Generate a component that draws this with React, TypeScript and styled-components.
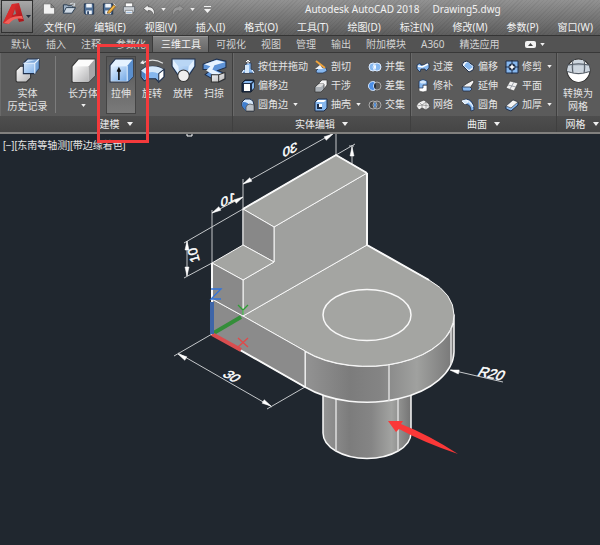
import React from "react";
import styled, { createGlobalStyle, css } from "styled-components";

const GlobalStyle = createGlobalStyle`
  * { box-sizing: border-box; }
  html, body { margin: 0; background: #20272f; }
  body, button {
    font-family: "Noto Sans", "Noto Sans CJK SC", sans-serif;
    font-size: 10px;
    line-height: 13px;
    color: #e4e4e4;
  }
  button { background: none; border: 0; margin: 0; padding: 0; cursor: pointer; white-space: nowrap; }
  svg { display: block; flex: none; }
`;

const Window = styled.div`
  position: relative;
  display: flex;
  flex-direction: column;
  min-height: 100vh;
  overflow: hidden;
`;

const Header = styled.header`
  display: flex;
  gap: 6px;
  height: 36px;
  padding-left: 1px;
  background:
    repeating-linear-gradient(135deg, rgba(0, 0, 0, 0.05) 0 1px, transparent 1px 3px),
    linear-gradient(#929292, #7a7a7a 45%, #5e5e5e);
  border-bottom: 1px solid #343434;
`;

const AppButton = styled.button`
  display: flex;
  align-items: center;
  width: 32px;
  height: 33px;
  border: 1px solid #303030;
  background: linear-gradient(#a9a9a9, #666);
`;

const HeaderRows = styled.div`
  flex: 1;
  min-width: 0;
`;

const QuickBar = styled.div`
  display: flex;
  align-items: center;
  height: 18px;
`;

const QuickButton = styled.button<{ $narrow?: boolean }>`
  display: flex;
  align-items: center;
  justify-content: center;
  width: ${(p) => (p.$narrow ? 9 : 20)}px;
  height: 17px;
`;

const Title = styled.div`
  display: flex;
  gap: 13px;
  margin-left: 88px;
  color: #f2f2f2;
  white-space: nowrap;
`;

const MenuBar = styled.nav`
  display: flex;
  gap: 19px;
  height: 18px;
  padding-left: 5px;
`;

const MenuButton = styled.button`
  height: 19px;
  color: #f2f2f2;
`;

const TabBar = styled.div`
  display: flex;
  height: 17px;
  padding-left: 3px;
  background: #535353;
  border-bottom: 1px solid #383838;
`;

const Tab = styled.button<{ $active?: boolean }>`
  padding: 0 7px 0 8px;
  color: #d2d2d2;
  ${(p) =>
    p.$active &&
    css`
      color: #f4f4f4;
      background: linear-gradient(#858585, #666);
      box-shadow: inset 0 1px #979797, -1px 0 #3b3b3b, 1px 0 #3b3b3b;
    `}
`;

const RibbonToggle = styled.button`
  display: flex;
  align-items: center;
  gap: 4px;
  margin-left: 18px;
`;

const Ribbon = styled.section`
  display: grid;
  grid-template-columns: 233fr 178fr 146fr 51fr;
  margin-right: -8px;
  background: #5b5b5b;
  border-bottom: 2px solid #81807e;
`;

const Panel = styled.section`
  display: flex;
  flex-direction: column;
  min-width: 0;
  border-right: 1px solid #3f3f3f;
  box-shadow: inset 1px 0 #696969;
`;

const PanelBody = styled.div`
  display: flex;
  height: 63px;
  padding-top: 3px;
`;

const PanelTitle = styled.button`
  display: flex;
  align-items: center;
  justify-content: center;
  gap: 7px;
  height: 16px;
  color: #ededed;
  background: linear-gradient(#4e4e4e, #454545);
`;

const LargeButton = styled.button<{ $selected?: boolean; $width: number }>`
  display: flex;
  flex-direction: column;
  align-items: center;
  width: ${(p) => p.$width}px;
  height: 58px;
  padding-top: 2px;
  ${(p) =>
    p.$selected &&
    css`
      background: linear-gradient(#565656, #7b7b7b);
      box-shadow: inset 0 0 0 1px #444;
    `}
`;

const LargeLabel = styled.span`
  margin-top: 4px;
`;

const DropMark = styled.span`
  padding-top: 4px;
`;

const Divider = styled.div`
  width: 1px;
  height: 57px;
  margin-right: 12px;
  background: #7c7c7c;
`;

const SolidTools = styled.div`
  display: flex;
  gap: 1px;
  margin-left: 8px;
`;

const ToolGrid = styled.div<{ $columns: string; $inset: number }>`
  display: grid;
  grid-template-columns: ${(p) => p.$columns};
  grid-template-rows: repeat(3, 19px);
  padding: 1px 0 0 ${(p) => p.$inset}px;
`;

const SmallButton = styled.button`
  display: flex;
  align-items: center;
  gap: 3px;
`;

const SmallMark = styled.span`
  padding-left: 2px;
`;

const Viewport = styled.main`
  position: relative;
  flex: 1;
  background: #20272f;
`;

const ViewLabels = styled.div`
  position: absolute;
  left: 3px;
  top: 5px;
  display: flex;
`;

const ViewButton = styled.button`
  font-family: "Liberation Sans", "Noto Sans CJK SC", sans-serif;
`;

const Drawing = styled.svg`
  width: 100%;
  height: auto;
`;

const Highlight = styled.div`
  position: absolute;
  left: 97px;
  top: 44px;
  width: 52px;
  height: 99px;
  border: 3px solid #f33a3c;
  pointer-events: none;
`;

const Caret = ({ size = 5 }: { size?: number }) => (
  <svg width={size} height={size === 5 ? 3 : 4} viewBox="0 0 6 4">
    <path d="M0 0H6L3 4Z" fill="#f0f0f0" />
  </svg>
);

const blue = "#86b7ee";
const pale = "#d6e8fa";
const ink = "#1f2f4a";

const Defs = () => (
  <defs>
    <linearGradient id="blueFace" x1="0" y1="0" x2="1" y2="1">
      <stop offset="0" stopColor="#e2f0ff" />
      <stop offset="1" stopColor="#74a9e6" />
    </linearGradient>
    <linearGradient id="greyFace" x1="0" y1="0" x2="1" y2="1">
      <stop offset="0" stopColor="#fafafa" />
      <stop offset="1" stopColor="#b4b4b6" />
    </linearGradient>
    <linearGradient id="red" x1="0" y1="0" x2="1" y2="1">
      <stop offset="0" stopColor="#e23a3a" />
      <stop offset="1" stopColor="#a80f14" />
    </linearGradient>
  </defs>
);

const quickIcons: Record<string, React.ReactNode> = {
  新建: <path d="M1 2H9L13 6V13H1ZM9 2V6H13" fill="#f2f2f2" stroke="#555" strokeWidth=".7" />,
  打开: (
    <>
      <path d="M1 12V3H5L6 4H11V7" fill="#9fb1c4" stroke="#26384c" />
      <path d="M1 12L4 6H14L10 12Z" fill="#cfdae5" stroke="#26384c" />
      <path d="M8 2Q11 0 13 3M13 1V4H10" fill="none" stroke="#e6edf5" strokeWidth=".8" />
    </>
  ),
  保存: (
    <>
      <path d="M2 2H12V13H3L2 12Z" fill="#4f6f96" stroke="#1f3048" />
      <path d="M4 2H10V6H4ZM4 9H10V13H4Z" fill="#eef3f9" />
      <path d="M5 10H7V13H5Z" fill="#33496a" />
    </>
  ),
  另存为: (
    <>
      <path d="M1 2H11V13H2L1 12Z" fill="#4f6f96" stroke="#1f3048" />
      <path d="M3 2H9V6H3ZM3 9H9V13H3Z" fill="#eef3f9" />
      <path d="M6 10L12 3L14 5L8 12L5 12Z" fill="#f2b544" stroke="#6c4415" strokeWidth=".7" />
      <path d="M12 2L14 4" stroke="#fff" />
    </>
  ),
  打印: (
    <>
      <path d="M3 6V1H11V6" fill="#fff" stroke="#666" />
      <path d="M1 5H13V11H1Z" fill="#c9ced4" stroke="#4c5259" strokeWidth=".7" />
      <path d="M3 9H11V13H3Z" fill="#fff" stroke="#666" strokeWidth=".7" />
      <path d="M4 11H10" stroke="#7ba4d0" />
    </>
  ),
  放弃: <path d="M1 7L6 3V5Q13 5 13 13H11Q11 9 6 9V11Z" fill="#eee" stroke="#4a4a4a" strokeWidth=".7" />,
  重做: <path d="M13 7L8 3V5Q1 5 1 13H3Q3 9 8 9V11Z" fill="#999" stroke="#6c6c6c" strokeWidth=".7" />,
};

const QuickIcon = ({ name }: { name: string }) => (
  <svg width="14" height="14" viewBox="0 0 14 15" aria-hidden="true">
    {quickIcons[name]}
  </svg>
);

const largeIcons: Record<string, React.ReactNode> = {
  history: (
    <>
      <path d="M1 12L5 8H15V19L11 23H2L1 22Z" fill="url(#greyFace)" stroke="#333" />
      <path d="M8 5L12 1H23V10L19 15H8Z" fill="url(#blueFace)" stroke={ink} />
      <path d="M8 5H19V15L23 10V1Z" fill="#6797cf" opacity=".7" />
      <path d="M8 5H19L23 1M19 5V15" fill="none" stroke="#eaf4ff" />
    </>
  ),
  box: (
    <>
      <path d="M1 8L7 1H23V17L17 23H1Z" fill="#fbfbfb" stroke="#333" />
      <path d="M2 8H17V23H2Z" fill="url(#greyFace)" />
      <path d="M17 8L23 1V17L17 23Z" fill="#a6a6a8" />
    </>
  ),
  extrude: (
    <>
      <path d="M1 7L6 1H23V18L18 23H1Z" fill="#e5f2ff" stroke={ink} />
      <path d="M2 8H17V22H2Z" fill="url(#blueFace)" />
      <path d="M18 7L23 1V18L18 23Z" fill="#5a8fce" />
      <path d="M9.500 21V11M8 13L9.500 10L11 13" fill="none" stroke="#111" strokeWidth="1.500" />
    </>
  ),
  revolve: (
    <>
      <path d="M2 5Q12 -1 22 5" fill="none" stroke="#ddd" strokeWidth="1.200" />
      <path d="M0 5L3 2L4 6Z" fill="#eee" />
      <path d="M1 12L5 9Q12 7 19 9L23 11V18L18 23L15 20H8L4 22L1 18Z" fill={blue} stroke={ink} />
      <path d="M1 12L5 9Q12 7 19 9L23 11L18 15Q12 12 5 15Z" fill={pale} />
      <path d="M18 15L23 11V18L18 23Z" fill="#fff" stroke={ink} />
      <path d="M2 13L5 15V21L2 18Z" fill="#4c81c4" />
    </>
  ),
  loft: (
    <>
      <path d="M1 1H23V8L15 20H9L1 8Z" fill="url(#blueFace)" stroke={ink} />
      <path d="M2 2H22L17 8H7Z" fill="#b9d6f5" />
      <path d="M7 8L2 2V8L8 16ZM17 8L22 2V8L16 16Z" fill="#e4f1ff" />
      <circle cx="12" cy="17" r="5.500" fill="#eee" stroke="#333" />
    </>
  ),
  sweep: (
    <>
      <path d="M1 6L14 1L23 3V9L15 12L22 15V20L16 23L10 20L3 16L9 11L1 11Z" fill="#5d93d8" stroke={ink} />
      <path d="M2 6L14 2L22 4L12 7L10 11L16 14L21 15L16 17L9 15L4 12L8 8Z" fill="#e7f3ff" />
      <path d="M9 16H16V23H9ZM16 16L22 14V20L16 23Z" fill="url(#greyFace)" stroke="#333" />
    </>
  ),
  mesh: (
    <>
      <circle cx="12" cy="12" r="11" fill="#eee" stroke="#333" />
      <path d="M2 7Q12 2 22 7L23 13H1Z" fill="#8e99a5" />
      <path d="M8 2H16L17 6H7ZM7 7H17V14H7ZM2 7H6V13L1 13ZM18 7H22L23 13H18Z" fill="#cdd6df" />
      <path d="M7 1Q5 9 7 15M17 1Q19 9 17 15M1 7Q12 4 23 7M1 13Q12 17 23 13" fill="none" stroke="#555e68" />
      <path d="M2 14Q12 18 22 14Q19 23 12 23Q5 23 2 14Z" fill="#fff" />
    </>
  ),
};

const LargeIcon = ({ name }: { name: string }) => (
  <svg width="25" height="25" viewBox="0 0 24 24" aria-hidden="true">
    {largeIcons[name]}
  </svg>
);

const smallIcons: Record<string, React.ReactNode> = {
  按住并拖动: (
    <>
      <path d="M4 5L7 3H10V9L13 11V13H1V11L4 9Z" fill={blue} stroke={ink} strokeWidth=".7" />
      <path d="M4 5H8V13H4Z" fill={pale} />
      <path d="M7 4V0M5 2L7 0L9 2M1 13L3 10M13 13L11 10" fill="none" stroke="#fff" />
    </>
  ),
  偏移边: (
    <>
      <path d="M1 4L4 1H13V9L10 13H1Z" fill={ink} stroke="#111c2c" />
      <path d="M4 2H12L10 4H2ZM11 5L13 3V9L11 11Z" fill={blue} />
      <path d="M3 5H9V12H3Z" fill="#fff" />
    </>
  ),
  圆角边: (
    <>
      <path d="M1 4L4 1H9Q13 2 13 7V13H5L1 8Z" fill={pale} stroke={ink} />
      <path d="M2 4Q8 4 9 9L5 13L1 8Z" fill="#3f7fd0" />
      <path d="M5 13V9Q6 6 9 6L13 7V13Z" fill="#bcc2c9" stroke="#444" strokeWidth=".7" />
    </>
  ),
  剖切: (
    <>
      <path d="M2 11L6 7L12 8L13 11L9 13H3Z" fill={blue} stroke={ink} strokeWidth=".7" />
      <path d="M2 1L11 8" stroke="#f0a33a" strokeWidth="2" />
      <path d="M6 5L1 9L9 9Z" fill="#eef3f8" />
    </>
  ),
  干涉: (
    <>
      <path d="M5 4L8 1H13V6L10 10H5Z" fill="#f5f5f5" stroke="#333" strokeWidth=".7" />
      <path d="M1 8L4 5H10V10L7 13H1Z" fill="#aab0b6" stroke="#333" strokeWidth=".7" />
      <path d="M5 5H10L7 8H2Z" fill="#ddd" />
    </>
  ),
  抽壳: (
    <>
      <path d="M1 4L4 1H13V10L10 13H1Z" fill={blue} stroke={ink} />
      <path d="M2 4L4 2H12L10 4Z" fill="#fff" />
      <path d="M3 6H8V11H3Z" fill={ink} />
      <path d="M5 6H8V9H5Z" fill="#fff" />
    </>
  ),
  并集: (
    <>
      <circle cx="5" cy="7" r="4" fill={blue} stroke="#dcebff" />
      <circle cx="9" cy="7" r="4" fill={blue} stroke="#dcebff" />
      <path d="M7 4Q9 7 7 10Q5 7 7 4Z" fill="#fff" />
    </>
  ),
  差集: (
    <>
      <circle cx="9" cy="7" r="4" fill="none" stroke="#aaa" />
      <path d="M7 3A4.500 4.500 0 1 0 7 11Q4 7 7 3Z" fill="#4d8fe6" stroke="#cfe2fa" />
      <path d="M7 4Q9 7 7 10Q5 7 7 4Z" fill="#232a34" />
    </>
  ),
  交集: (
    <>
      <circle cx="5" cy="7" r="4" fill="#474747" stroke="#aaa" />
      <circle cx="9" cy="7" r="4" fill="none" stroke="#aaa" />
      <path d="M7 4Q9 7 7 10Q5 7 7 4Z" fill="#5ca0f2" />
    </>
  ),
  过渡: (
    <>
      <path d="M1 5L4 3L5 5H9L10 3L13 4V8L10 11L9 9H5L4 12L1 9Z" fill={blue} stroke={ink} strokeWidth=".8" />
      <path d="M2 6L6 7L12 4" fill="none" stroke="#fff" strokeWidth="1.500" />
    </>
  ),
  修补: (
    <>
      <path d="M3 6H11V12Q7 14 3 12Z" fill="#fff" stroke="#444" strokeWidth=".7" />
      <path d="M3 2Q7 -1 11 2V6H7V9H3Z" fill={blue} stroke={ink} strokeWidth=".7" />
      <ellipse cx="7" cy="3" rx="3" ry="1.500" fill={pale} />
    </>
  ),
  网络: (
    <>
      <path d="M0 8L3 4L8 2L13 6L14 9L10 12L6 10L3 12Z" fill="#f0f0f0" stroke="#444" strokeWidth=".8" />
      <path d="M3 4L6 7L10 4M6 7L6 10M1 8L6 7L13 8M10 4L10 12" fill="none" stroke="#777" strokeWidth=".6" />
    </>
  ),
  偏移: (
    <>
      <path d="M1 5Q2 1 6 1L13 6L12 10L8 12Z" fill="#f4f9ff" stroke={ink} />
      <path d="M5 3L7 2L12 7L8 10L3 6Z" fill={blue} />
    </>
  ),
  延伸: (
    <>
      <path d="M5 5L12 1L13 3L9 9L1 8Z" fill="#f2f2f2" stroke="#333" strokeWidth=".8" />
      <path d="M1 8H9L11 10L9 12H2Z" fill={blue} stroke={ink} strokeWidth=".8" />
    </>
  ),
  圆角: (
    <>
      <path d="M1 3L5 1Q13 2 13 12L10 13Q10 6 4 6Z" fill={blue} stroke={ink} strokeWidth=".8" />
      <path d="M5 2Q10 3 12 9M1 3L5 2L7 4L4 6Z" fill={pale} stroke="#eef6ff" />
    </>
  ),
  修剪: (
    <>
      <path d="M1 1H13V13H1Z" fill={blue} stroke={ink} />
      <path d="M7 0V14M0 7H14" stroke={ink} />
      <circle cx="7" cy="7" r="3.500" fill={ink} />
      <path d="M7 4L8 6L10 7L8 8L7 10L6 8L4 7L6 6Z" fill="#fff" />
    </>
  ),
  平面: (
    <>
      <path d="M5 2L13 4L9 12L1 9Z" fill="#f0f0f0" stroke="#444" strokeWidth=".7" />
      <path d="M9 3L5 10M3 6L11 8" stroke="#8a9099" strokeWidth=".8" />
    </>
  ),
  加厚: (
    <>
      <path d="M1 8L8 2L13 4V7L6 13L1 11Z" fill={blue} stroke={ink} />
      <path d="M1 8L8 2L13 4L6 10Z" fill="#f4f4f4" stroke="#444" strokeWidth=".7" />
    </>
  ),
};

const Tool = ({ name, menu }: { name: string; menu?: boolean }) => (
  <SmallButton type="button">
    <svg width="14" height="14" viewBox="0 0 14 14" aria-hidden="true">
      {smallIcons[name]}
    </svg>
    <span>{name}</span>
    {menu && (
      <SmallMark>
        <Caret />
      </SmallMark>
    )}
  </SmallButton>
);

const menus = ["文件(F)", "编辑(E)", "视图(V)", "插入(I)", "格式(O)", "工具(T)", "绘图(D)", "标注(N)", "修改(M)", "参数(P)", "窗口(W)"];
const tabs = ["默认", "插入", "注释", "参数化", "三维工具", "可视化", "视图", "管理", "输出", "附加模块", "A360", "精选应用"];
const solidTools = [
  { icon: "extrude", label: "拉伸" },
  { icon: "revolve", label: "旋转" },
  { icon: "loft", label: "放样" },
  { icon: "sweep", label: "扫掠" },
];

const Arrow = ({ x, y, angle }: { x: number; y: number; angle: number }) => (
  <path d="M0 0L-9 -2V2Z" fill="#fff" stroke="#fff" strokeWidth=".5" transform={`translate(${x} ${y}) rotate(${angle})`} />
);

const Model = () => (
  <Drawing viewBox="0 134 600 411" role="img" aria-label="三维模型">
    <Defs />
    <defs>
      <linearGradient id="rim" gradientUnits="userSpaceOnUse" x1="305" y1="0" x2="454" y2="0">
        <stop offset="0" stopColor="#939393" />
        <stop offset=".3" stopColor="#7c7c7c" />
        <stop offset=".5" stopColor="#848484" />
        <stop offset=".75" stopColor="#a0a19f" />
        <stop offset="1" stopColor="#777" />
      </linearGradient>
      <linearGradient id="shaft" gradientUnits="userSpaceOnUse" x1="323" y1="0" x2="411" y2="0">
        <stop offset="0" stopColor="#959595" />
        <stop offset=".3" stopColor="#7c7c7c" />
        <stop offset=".55" stopColor="#858585" />
        <stop offset=".78" stopColor="#a2a3a1" />
        <stop offset="1" stopColor="#747474" />
      </linearGradient>
    </defs>

    <g stroke="#c4c7ca" strokeWidth="1" fill="none">
      <path d="M243 179V245M336 134V155M212 210V263M243 209L184 243M212 263L184 278M187 241V276" />
      <path d="M243 184L332 134M212 213L243 197M336 155L355 144M352 145V165M349 146H354" />
      <path d="M212 334L174 356M305 387L267 409M178 353L272 407M451 370L503 382" />
      <path d="M187 134V136H192V134" stroke="#fff" />
    </g>
    <Arrow x={243} y={184} angle={150} />
    <Arrow x={333} y={134} angle={-30} />
    <Arrow x={212} y={213} angle={150} />
    <Arrow x={243} y={197} angle={-30} />
    <Arrow x={187} y={241} angle={-90} />
    <Arrow x={187} y={276} angle={90} />
    <Arrow x={352} y={147} angle={-90} />
    <Arrow x={178} y={354} angle={210} />
    <Arrow x={271} y={406} angle={30} />
    <Arrow x={450} y={370} angle={193} />

    <g fill="#fff" stroke="#fff" strokeWidth=".5" fontFamily="Liberation Sans, sans-serif" fontSize="13" textAnchor="middle">
      <text transform="translate(290 154) skewY(-26) scale(-1 1)">30</text>
      <text transform="translate(228 204) skewY(-26) scale(-1 1)">10</text>
      <text transform="translate(198 254) rotate(-105)">10</text>
      <text transform="translate(228 379) rotate(30) skewX(-25)">30</text>
      <text transform="translate(489 378) rotate(11) skewX(-20)" fontSize="14">R20</text>
    </g>

    <g stroke="#f8f8f8" strokeWidth="1.500" strokeLinejoin="round">
      <path d="M323 390V433A44 25.500 0 0 0 411 433V390Z" fill="url(#shaft)" />
      <path d="M336 396V451M398 396V451" stroke="#ddd" />
      <path d="M305 351A87 51 0 0 0 454 315V352A87 51 0 0 1 305 387Z" fill="url(#rim)" />
      <path d="M243 316L367 245L429 280Q454 294 454 315A87 51 0 0 1 305 351Z" fill="#a4a5a2" strokeWidth="1" />
      <path d="M212 299L243 316L305 351V387L212 334Z" fill="#8b8b8b" strokeWidth="1" />
      <path d="M274 227L367 173V245L243 316V280L274 262Z" fill="#9fa09e" strokeWidth="1" />
      <path d="M243 209L336 155L367 173L274 227Z" fill="#a4a5a2" strokeWidth="1" />
      <path d="M243 209L274 227V262L243 245Z" fill="#888" strokeWidth="1" />
      <path d="M243 245L274 262L243 280L212 263Z" fill="#a4a5a2" strokeWidth="1" />
      <path d="M212 263L243 280V316L212 299Z" fill="#898989" strokeWidth="1" />
      <path d="M367 173V245L429 280M243 209L336 155L367 173M212 263V334L305 387" fill="none" strokeWidth="2" />
      <path d="M389 365V401M451 328V364" stroke="#ddd" fill="none" />
      <ellipse cx="367" cy="315" rx="44" ry="25.500" fill="#a4a5a2" />
    </g>

    <g fill="none" strokeWidth="4">
      <path d="M212 334L241 317" stroke="#348e39" />
      <path d="M212 334L241 350" stroke="#d94d4f" />
      <path d="M212 334V302" stroke="#3e65a8" />
    </g>
    <g fill="none" strokeWidth="1.300">
      <path d="M211 289H221L211 299H221" stroke="#3274dc" />
      <path d="M238 305L243 310L248 305M243 310V315" stroke="#2da033" />
      <path d="M238 338L248 347M248 338L238 347" stroke="#e34849" />
    </g>
    <path d="M388 421L403 421L401 424Q429 435 458 454Q425 443 399 429L396 432Z" fill="#fa3838" />
  </Drawing>
);

export default function App() {
  return (
    <Window>
      <GlobalStyle />
      <Header>
        <AppButton type="button" aria-label="应用程序菜单">
          <svg width="30" height="31" viewBox="0 0 30 31">
            <path d="M10 3L17 2L22 20L17 21L15 16L9 17L7 23L1 22Z" fill="url(#red)" />
            <path d="M10 3L14 3L9 17L7 23L1 22Z" fill="#d92c2c" />
            <path d="M13 8L14 13L11 14Z" fill="#858585" />
            <path d="M2 22Q9 14 20 15L21 18Q12 16 7 23Z" fill="#f1625b" />
            <path d="M24 14H29L26.500 17Z" fill="#222b3a" />
          </svg>
        </AppButton>
        <HeaderRows>
          <QuickBar>
            {["新建", "打开", "保存", "另存为", "打印", "放弃"].map((name) => (
              <QuickButton key={name} type="button" aria-label={name}>
                <QuickIcon name={name} />
              </QuickButton>
            ))}
            <QuickButton $narrow type="button" aria-label="放弃列表"><Caret /></QuickButton>
            <QuickButton type="button" aria-label="重做"><QuickIcon name="重做" /></QuickButton>
            <QuickButton $narrow type="button" aria-label="重做列表"><Caret /></QuickButton>
            <QuickButton type="button" aria-label="自定义快速访问工具栏">
              <svg width="7" height="7" viewBox="0 0 7 7">
                <path d="M0 0H7V1H0ZM0 3H7L3.500 7Z" fill="#f3f3f3" />
              </svg>
            </QuickButton>
            <Title>
              <span>Autodesk AutoCAD 2018</span>
              <span>Drawing5.dwg</span>
            </Title>
          </QuickBar>
          <MenuBar>
            {menus.map((m) => <MenuButton key={m} type="button">{m}</MenuButton>)}
          </MenuBar>
        </HeaderRows>
      </Header>
      <TabBar role="tablist">
        {tabs.map((t) => (
          <Tab key={t} type="button" role="tab" aria-selected={t === "三维工具"} $active={t === "三维工具"}>{t}</Tab>
        ))}
        <RibbonToggle type="button" aria-label="最小化功能区">
          <svg width="11" height="7" viewBox="0 0 11 7">
            <rect width="11" height="7" rx="2" fill="#f2f2f2" />
            <path d="M3 5L5.500 2L8 5Z" fill="#444" />
          </svg>
          <Caret />
        </RibbonToggle>
      </TabBar>
      <Ribbon>
        <Panel>
          <PanelBody>
            <LargeButton type="button" $width={55}>
              <LargeIcon name="history" />
              <LargeLabel>实体<br />历史记录</LargeLabel>
            </LargeButton>
            <Divider />
            <LargeButton type="button" $width={30}>
              <LargeIcon name="box" />
              <LargeLabel>长方体</LargeLabel>
              <DropMark><Caret /></DropMark>
            </LargeButton>
            <SolidTools>
              {solidTools.map((tool) => (
                <LargeButton key={tool.icon} type="button" $width={30} $selected={tool.icon === "extrude"}>
                  <LargeIcon name={tool.icon} />
                  <LargeLabel>{tool.label}</LargeLabel>
                </LargeButton>
              ))}
            </SolidTools>
          </PanelBody>
          <PanelTitle type="button">建模<Caret size={6} /></PanelTitle>
        </Panel>
        <Panel>
          <PanelBody>
            <ToolGrid $columns="73px 54px 42px" $inset={8}>
              <Tool name="按住并拖动" /><Tool name="剖切" /><Tool name="并集" />
              <Tool name="偏移边" /><Tool name="干涉" /><Tool name="差集" />
              <Tool name="圆角边" menu /><Tool name="抽壳" menu /><Tool name="交集" />
            </ToolGrid>
          </PanelBody>
          <PanelTitle type="button">实体编辑<Caret size={6} /></PanelTitle>
        </Panel>
        <Panel>
          <PanelBody>
            <ToolGrid $columns="45px 44px 50px" $inset={5}>
              <Tool name="过渡" /><Tool name="偏移" /><Tool name="修剪" menu />
              <Tool name="修补" /><Tool name="延伸" /><Tool name="平面" />
              <Tool name="网络" /><Tool name="圆角" /><Tool name="加厚" menu />
            </ToolGrid>
          </PanelBody>
          <PanelTitle type="button">曲面<Caret size={6} /></PanelTitle>
        </Panel>
        <Panel>
          <PanelBody>
            <LargeButton type="button" $width={42}>
              <LargeIcon name="mesh" />
              <LargeLabel>转换为<br />网格</LargeLabel>
            </LargeButton>
          </PanelBody>
          <PanelTitle type="button">网格<Caret size={6} /></PanelTitle>
        </Panel>
      </Ribbon>
      <Viewport>
        <Model />
        <ViewLabels>
          <ViewButton type="button">[−]</ViewButton>
          <ViewButton type="button">[东南等轴测]</ViewButton>
          <ViewButton type="button">[带边缘着色]</ViewButton>
        </ViewLabels>
      </Viewport>
      <Highlight />
    </Window>
  );
}
